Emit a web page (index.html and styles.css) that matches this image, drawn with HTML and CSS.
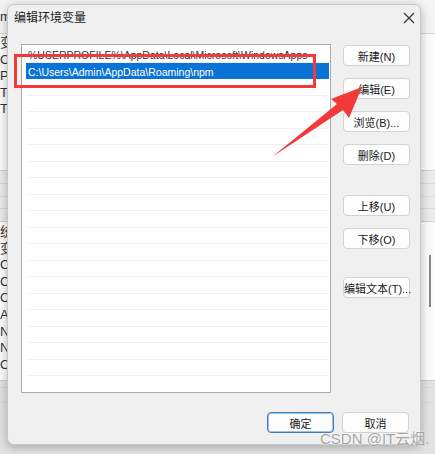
FILE: index.html
```html
<!DOCTYPE html>
<html lang="zh-CN">
<head>
    <meta charset="UTF-8">
    <meta name="viewport" content="width=device-width, initial-scale=1.0">
    <title>编辑环境变量</title>
    <link rel="stylesheet" href="styles.css">
</head>
<body>

    <!-- window behind the dialog -->
    <div class="backdrop">
        <div class="bg-top"><span>m</span></div>
        <div class="bg-list">
            <div class="bg-row">变</div>
            <div class="bg-row">O</div>
            <div class="bg-row">Pa</div>
            <div class="bg-row">TE</div>
            <div class="bg-row">TI</div>
        </div>
        <div class="bg-mid">
            <div class="bg-line"></div>
            <div class="bg-line"></div>
            <div class="bg-line"></div>
        </div>
        <div class="bg-list2">
            <div class="bg-rows">
                <div class="bg-row">统</div>
                <div class="bg-row">变</div>
                <div class="bg-row">CL</div>
                <div class="bg-row">Co</div>
                <div class="bg-row">O</div>
                <div class="bg-row">A</div>
                <div class="bg-row">N</div>
                <div class="bg-row">N</div>
                <div class="bg-row">O</div>
            </div>
            <div class="bg-scroll"></div>
        </div>
        <div class="bg-bottom">
            <div class="bg-line"></div>
            <div class="bg-line"></div>
        </div>
    </div>

    <!-- the dialog -->
    <div class="dialog">
        <div class="titlebar">
            <span class="title">编辑环境变量</span>
            <svg class="close" width="12" height="12" viewBox="0 0 12 12">
                <path d="M1 1 L11 11 M11 1 L1 11" stroke="#333" stroke-width="1.1" fill="none"/>
            </svg>
        </div>

        <div class="content">
            <div class="path-list">
                <div class="path-row">%USERPROFILE%\AppData\Local\Microsoft\WindowsApps</div>
                <div class="path-row selected">C:\Users\Admin\AppData\Roaming\npm</div>
                <div class="path-row"></div>
                <div class="path-row"></div>
                <div class="path-row"></div>
                <div class="path-row"></div>
                <div class="path-row"></div>
                <div class="path-row"></div>
                <div class="path-row"></div>
                <div class="path-row"></div>
                <div class="path-row"></div>
                <div class="path-row"></div>
                <div class="path-row"></div>
                <div class="path-row"></div>
                <div class="path-row"></div>
                <div class="path-row"></div>
                <div class="path-row"></div>
                <div class="path-row"></div>
                <div class="path-row"></div>
                <div class="path-row"></div>
                <div class="path-row"></div>
            </div>

            <div class="side-buttons">
                <button class="btn">新建(N)</button>
                <button class="btn">编辑(E)</button>
                <button class="btn">浏览(B)...</button>
                <button class="btn">删除(D)</button>
                <button class="btn group-gap">上移(U)</button>
                <button class="btn">下移(O)</button>
                <button class="btn text-gap">编辑文本(T)...</button>
            </div>
        </div>

        <div class="footer">
            <button class="btn default">确定</button>
            <button class="btn">取消</button>
        </div>
    </div>

    <!-- annotations drawn on top of the screenshot -->
    <div class="highlight"></div>
    <svg class="arrow" width="435" height="454" viewBox="0 0 435 454">
        <polygon points="362,87 331,99 337,104 272,157 343,110 349,118" fill="#f23a3a"/>
    </svg>
    <div class="watermark">CSDN @IT云烟.</div>

</body>
</html>
```

FILE: styles.css
```css
* {
    margin: 0;
    padding: 0;
    box-sizing: border-box;
}

body {
    width: 435px;
    height: 454px;
    overflow: hidden;
    position: relative;
    font-family: "Liberation Sans", "Noto Sans CJK SC", sans-serif;
    font-size: 11px;
    color: #1a1a1a;
    background-color: #e3e3e3;
}

/* background window */
.backdrop {
    display: flex;
    flex-direction: column;
    height: 100%;
}

.bg-top {
    height: 34px;
    background-color: #f4f4f4;
    border-bottom: 1px solid #d6d6d6;
    padding-top: 9px;
    font-size: 13px;
    color: #333;
}

.bg-list {
    height: 136px;
    background-color: #fbfbfb;
    padding-top: 1px;
}

.bg-row {
    height: 16.6px;
    line-height: 16.6px;
    font-size: 13px;
    color: #333;
    white-space: nowrap;
    overflow: hidden;
}

.bg-mid {
    height: 52px;
    background-color: #ebebeb;
    border-top: 1px solid #cfcfcf;
    border-bottom: 1px solid #cfcfcf;
    display: flex;
    flex-direction: column;
    justify-content: space-evenly;
}

.bg-line {
    height: 1px;
    background-color: #d8d8d8;
}

.bg-list2 {
    height: 158px;
    background-color: #fbfbfb;
    display: flex;
    justify-content: space-between;
    padding-top: 2px;
}

.bg-scroll {
    width: 2px;
    height: 52px;
    margin-top: 31px;
    margin-right: 4px;
    background-color: #888;
}

.bg-bottom {
    flex: 1;
    background-color: #e2e2e2;
    border-top: 1px solid #cccccc;
    display: flex;
    flex-direction: column;
    gap: 14px;
    padding-top: 6px;
}

/* dialog */
.dialog {
    position: absolute;
    left: 7px;
    top: 4px;
    width: 414px;
    height: 441px;
    background-color: #f0f0f0;
    border: 1px solid #c9c9c9;
    border-radius: 7px;
    box-shadow: 0 2px 10px rgba(0, 0, 0, 0.28);
    display: flex;
    flex-direction: column;
}

.titlebar {
    height: 39px;
    display: flex;
    justify-content: space-between;
    align-items: flex-start;
    padding: 3px 5px 0 6px;
}

.title {
    font-family: "Noto Sans CJK SC", sans-serif;
    font-size: 12px;
    color: #222;
}

.close {
    margin-top: 4px;
}

.content {
    display: flex;
    align-items: flex-start;
    gap: 12px;
    padding-left: 13px;
}

.path-list {
    width: 310px;
    height: 349px;
    background-color: #ffffff;
    border: 1px solid #a9a9a9;
    padding: 1px 1px 0 4px;
    overflow: hidden;
}

.path-row {
    height: 16.5px;
    line-height: 18px;
    border-bottom: 1px solid #f0f0f0;
    padding-left: 2px;
    white-space: nowrap;
    overflow: hidden;
    font-size: 10.5px;
    color: #333;
}

.path-row.selected {
    background-color: #0a74d6;
    color: #ffffff;
    border-bottom-color: #0a74d6;
}

.side-buttons {
    width: 67px;
    display: flex;
    flex-direction: column;
    gap: 12px;
    padding-top: 1px;
}

.btn {
    height: 21px;
    width: 67px;
    font-family: "Liberation Sans", "Noto Sans CJK SC", sans-serif;
    font-size: 11px;
    color: #1a1a1a;
    background-color: #fdfdfd;
    border: 1px solid #d3d3d3;
    border-radius: 4px;
    white-space: nowrap;
}

.group-gap {
    margin-top: 18px;
}

.text-gap {
    margin-top: 16px;
}

.footer {
    display: flex;
    justify-content: flex-end;
    gap: 8px;
    padding: 19px 11px 0 0;
}

.btn.default {
    border: 1px solid #3d7fc4;
    box-shadow: inset 0 0 0 1px #9dc0e6;
}

/* annotations */
.highlight {
    position: absolute;
    left: 14px;
    top: 54px;
    width: 302px;
    height: 34px;
    border: 3px solid #f23a3a;
}

.arrow {
    position: absolute;
    left: 0;
    top: 0;
}

.watermark {
    position: absolute;
    left: 320px;
    top: 427px;
    font-family: "Liberation Sans", "Noto Sans CJK SC", sans-serif;
    font-size: 15px;
    color: rgba(150, 150, 150, 0.85);
    text-shadow: 0 0 2px #ffffff;
    white-space: nowrap;
}
```
